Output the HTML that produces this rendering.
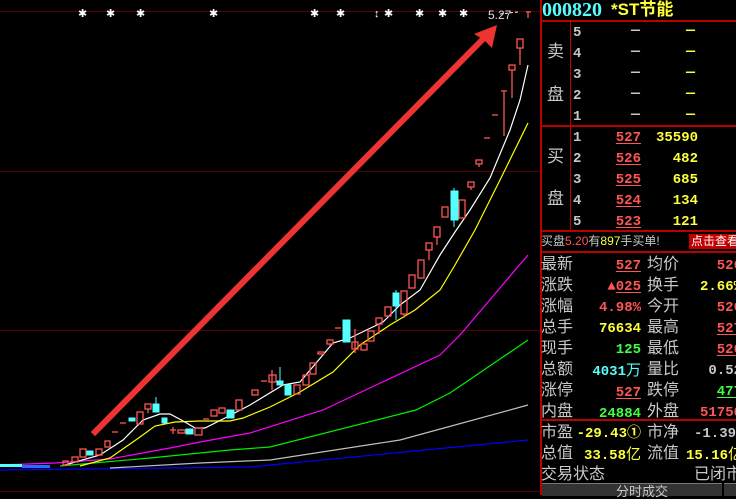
<!DOCTYPE html>
<html><head><meta charset="utf-8"><style>
body{margin:0;background:#000;width:736px;height:495px;overflow:hidden;position:relative;font-family:"Liberation Sans","Noto Sans CJK SC",sans-serif}
.t{position:absolute;font-size:15px;line-height:18px;white-space:nowrap}
.w{color:#c8c8c8}.r{color:#ff5555}.y{color:#ffff3c}.g{color:#40ff40}.c{color:#54ffff}
.u{text-decoration:underline;text-decoration-thickness:1px;text-underline-offset:2px}
.rt{text-align:right}
.hl{position:absolute;background:#b00;height:2px}
.vl{position:absolute;background:#b00;width:2px}
.mono{font-family:"Liberation Mono","Noto Sans CJK SC",monospace;font-weight:bold}
</style></head><body>
<svg width="540" height="495" style="position:absolute;left:0;top:0">
<g stroke="#5a0000" stroke-width="1">
<line x1="0" y1="11.5" x2="540" y2="11.5"/><line x1="0" y1="171.5" x2="540" y2="171.5"/><line x1="0" y1="330.5" x2="540" y2="330.5"/><line x1="0" y1="491.5" x2="540" y2="491.5"/>
</g>
<g fill="#fff" font-size="11" font-family="Liberation Sans">
<text x="78" y="17">✱</text><text x="106" y="17">✱</text><text x="136" y="17">✱</text><text x="209" y="17">✱</text><text x="310" y="17">✱</text><text x="336" y="17">✱</text><text x="374" y="17">↕</text><text x="384" y="17">✱</text><text x="415" y="17">✱</text><text x="438" y="17">✱</text><text x="459" y="17">✱</text>
<text x="488" y="19" font-size="12" fill="#ddd">5.27</text>
</g>
<g fill="none" stroke-width="1.2">
<polyline stroke="#0000ff" points="0,470 250,467 528,440"/>
<polyline stroke="#c0c0c0" points="110,468 200,463 270,460 400,440 528,405"/>
<polyline stroke="#00ee00" points="60,466 150,458 230,450 270,447 416,410 450,393 528,340"/>
<polyline stroke="#ff00ff" points="0,465 55,463 110,459 170,448 200,442 250,433 323,410 440,355 460,335 528,255"/>
<polyline stroke="#ffff00" points="80,466 110,458 140,437 155,426 175,422 200,421 230,421 243,418 270,407 300,392 333,372 360,345 390,325 415,310 440,290 455,265 475,230 500,180 528,123"/>
<polyline stroke="#ffffff" points="65,465 100,455 123,440 143,420 160,414 170,414 185,422 195,428 205,428 225,418 250,405 283,385 300,382 333,343 350,338 383,322 400,305 420,290 440,255 455,232 470,210 490,178 510,130 520,100 528,65"/>
</g>
<g stroke="#ff5555" fill="none" stroke-width="1.3">
<rect x="63" y="461" width="5" height="4"/><rect x="72" y="457" width="6" height="5"/><rect x="80" y="449" width="6" height="8"/><rect x="96" y="449" width="6" height="6"/><rect x="105" y="441" width="5" height="6"/>
<line x1="112" y1="432" x2="118" y2="432"/><line x1="120" y1="423" x2="126" y2="423"/>
<rect x="137" y="412" width="6" height="12"/><rect x="145" y="404" width="6" height="5"/><line x1="148" y1="409" x2="148" y2="413"/>
<line x1="170" y1="430" x2="176" y2="430"/><line x1="173" y1="427" x2="173" y2="434"/><rect x="178" y="430" width="7" height="3"/><rect x="195" y="428" width="7" height="7"/>
<line x1="203" y1="419" x2="209" y2="419"/><rect x="211" y="410" width="6" height="6"/><rect x="219" y="408" width="6" height="5"/><rect x="236" y="400" width="6" height="10"/><rect x="252" y="390" width="6" height="5"/>
<line x1="261" y1="381" x2="267" y2="381"/><rect x="269" y="375" width="7" height="7"/><line x1="272" y1="370" x2="272" y2="390"/>
<rect x="294" y="385" width="6" height="9"/><rect x="303" y="375" width="6" height="10"/><rect x="310" y="363" width="6" height="11"/><rect x="318" y="352" width="6" height="2"/><rect x="327" y="340" width="6" height="4"/><line x1="330" y1="344" x2="330" y2="346"/>
<line x1="335" y1="328" x2="341" y2="328"/>
<rect x="352" y="342" width="6" height="7"/><line x1="355" y1="329" x2="355" y2="353"/><rect x="361" y="344" width="6" height="6"/><rect x="368" y="331" width="6" height="10"/><rect x="376" y="318" width="6" height="6"/><line x1="379" y1="324" x2="379" y2="334"/><rect x="385" y="307" width="6" height="9"/>
<rect x="401" y="291" width="6" height="23"/><line x1="404" y1="314" x2="404" y2="318"/><rect x="409" y="275" width="6" height="13"/><rect x="418" y="260" width="6" height="18"/><rect x="426" y="243" width="6" height="7"/><line x1="429" y1="250" x2="429" y2="260"/>
<rect x="434" y="227" width="6" height="10"/><line x1="437" y1="237" x2="437" y2="245"/><rect x="442" y="207" width="6" height="10"/><rect x="459" y="200" width="6" height="18"/><rect x="468" y="182" width="6" height="5"/><line x1="471" y1="187" x2="471" y2="190"/><rect x="476" y="160" width="6" height="4"/><line x1="479" y1="164" x2="479" y2="167"/>
<line x1="484" y1="138" x2="490" y2="138"/><line x1="492" y1="115" x2="498" y2="115"/><line x1="501" y1="91" x2="507" y2="91"/><line x1="504" y1="91" x2="504" y2="136"/>
<rect x="509" y="65" width="6" height="5"/><line x1="512" y1="70" x2="512" y2="98"/><rect x="517" y="39" width="6" height="9"/><line x1="520" y1="48" x2="520" y2="65"/>
<line x1="526" y1="12" x2="531" y2="12"/><line x1="528" y1="12" x2="528" y2="18"/>
</g>
<g fill="#54ffff" stroke="#54ffff" stroke-width="1">
<rect x="87" y="451" width="6" height="4"/><rect x="129" y="418" width="6" height="3"/><rect x="153" y="404" width="6" height="8"/><line x1="156" y1="397" x2="156" y2="404"/><rect x="162" y="418" width="5" height="5"/><rect x="186" y="429" width="7" height="5"/><rect x="227" y="410" width="7" height="8"/>
<rect x="277" y="381" width="6" height="4"/><line x1="280" y1="367" x2="280" y2="381"/><rect x="285" y="385" width="6" height="10"/><rect x="343" y="320" width="7" height="22"/><rect x="393" y="293" width="6" height="13"/><line x1="396" y1="290" x2="396" y2="320"/><rect x="451" y="191" width="7" height="29"/><line x1="454" y1="188" x2="454" y2="227"/>
<rect x="0" y="464" width="22" height="3" fill="#54ffff" stroke="none"/><rect x="22" y="465" width="28" height="3" fill="#2a6aff" stroke="none"/>
</g>
<g stroke="#ee3333" stroke-width="6" stroke-linecap="square">
<line x1="95" y1="432" x2="485" y2="37"/>
</g>
<polygon points="497,25 492,48 484,40 474,34" fill="#ee3333"/>
<line x1="500" y1="14" x2="518" y2="12" stroke="#fff" stroke-dasharray="3,2"/>
</svg>

<div class="vl" style="left:540px;top:0;height:495px"></div>
<div class="hl" style="left:540px;top:20px;width:196px"></div>
<div class="hl" style="left:540px;top:125px;width:196px"></div>
<div class="hl" style="left:540px;top:230px;width:196px"></div>
<div class="hl" style="left:540px;top:251px;width:196px"></div>
<div class="hl" style="left:540px;top:419px;width:196px"></div>
<div class="vl" style="left:570px;top:20px;height:211px;width:1px"></div>

<div class="t c" style="left:542px;top:0;font-size:20px;line-height:20px;font-family:'Liberation Serif',serif;font-weight:bold">000820</div>
<div class="t y" style="left:611px;top:0;font-size:17px;line-height:20px;font-weight:bold">*ST节能</div>

<div class="t w" style="left:547px;top:43px;font-size:17px">卖</div>
<div class="t w" style="left:547px;top:86px;font-size:17px">盘</div>
<div class="t w" style="left:547px;top:148px;font-size:17px">买</div>
<div class="t w" style="left:547px;top:190px;font-size:17px">盘</div>

<div class="t w mono" style="left:573px;top:23px;font-size:14px;line-height:21px">5<br>4<br>3<br>2<br>1</div>
<div class="t w mono" style="left:631px;top:20px;line-height:21px">—<br>—<br>—<br>—<br>—</div>
<div class="t y mono" style="left:686px;top:20px;line-height:21px">—<br>—<br>—<br>—<br>—</div>

<div class="t w mono" style="left:573px;top:128px;font-size:14px;line-height:21px">1<br>2<br>3<br>4<br>5</div>
<div class="t r mono rt" style="left:600px;width:41px;top:128px;font-size:14px;line-height:21px"><span class="u">527</span><br><span class="u">526</span><br><span class="u">525</span><br><span class="u">524</span><br><span class="u">523</span></div>
<div class="t y mono rt" style="left:630px;width:68px;top:128px;font-size:14px;line-height:21px">35590<br>482<br>685<br>134<br>121</div>

<div class="t w" style="left:541px;top:233px;font-size:12px;line-height:16px">买盘<span class="r">5.20</span>有<span class="y">897</span>手买单!</div>
<div class="t" style="left:689px;top:234px;font-size:12px;line-height:15px;background:#c00000;color:#fff;padding:0 2px">点击查看</div>

<div class="t w" style="left:541px;top:254px;font-size:16px;line-height:21px">最新<br>涨跌<br>涨幅<br>总手<br>现手<br>总额<br>涨停<br>内盘</div>
<div class="t w" style="left:647px;top:254px;font-size:16px;line-height:21px">均价<br>换手<br>今开<br>最高<br>最低<br>量比<br>跌停<br>外盘</div>
<div class="t mono rt" style="left:560px;width:81px;top:256px;font-size:14px;line-height:21px"><span class="r u">527</span><br><span class="r">▲<span class="u">025</span></span><br><span class="r">4.98%</span><br><span class="y">76634</span><br><span class="g">125</span><br><span class="c">4031<span style="font-weight:normal;font-size:15px">万</span></span><br><span class="r u">527</span><br><span class="g">24884</span></div>
<div class="t mono rt" style="left:680px;width:62px;top:256px;font-size:14px;line-height:21px"><span class="r">526</span><br><span class="y">2.66%</span><br><span class="r">526</span><br><span class="r u">527</span><br><span class="r u">520</span><br><span class="w">0.52</span><br><span class="g u">477</span><br><span class="r">51750</span></div>

<div class="t w" style="left:541px;top:422px;font-size:16px;line-height:21px">市盈<br>总值<br>交易状态</div>
<div class="t w" style="left:647px;top:422px;font-size:16px;line-height:21px">市净<br>流值</div>
<div class="t mono rt y" style="left:540px;width:101px;top:424px;font-size:14px;line-height:21px">-29.43①<br>33.58<span style="font-weight:normal;font-size:15px">亿</span></div>
<div class="t mono w" style="left:694px;top:424px;font-size:14px;line-height:21px">-1.39</div>
<div class="t mono y" style="left:686px;top:445px;font-size:14px;line-height:21px">15.16<span style="font-weight:normal;font-size:15px">亿</span></div>
<div class="t w" style="left:694px;top:464px;font-size:16px;line-height:21px">已闭市</div>
<div style="position:absolute;left:542px;top:483px;width:180px;height:12px;background:#333;border-top:1px solid #777"></div>
<div style="position:absolute;left:724px;top:483px;width:12px;height:12px;background:#333;border-top:1px solid #777"></div>
<div class="t w" style="left:616px;top:485px;font-size:13px;line-height:14px">分时成交</div>
</body></html>
